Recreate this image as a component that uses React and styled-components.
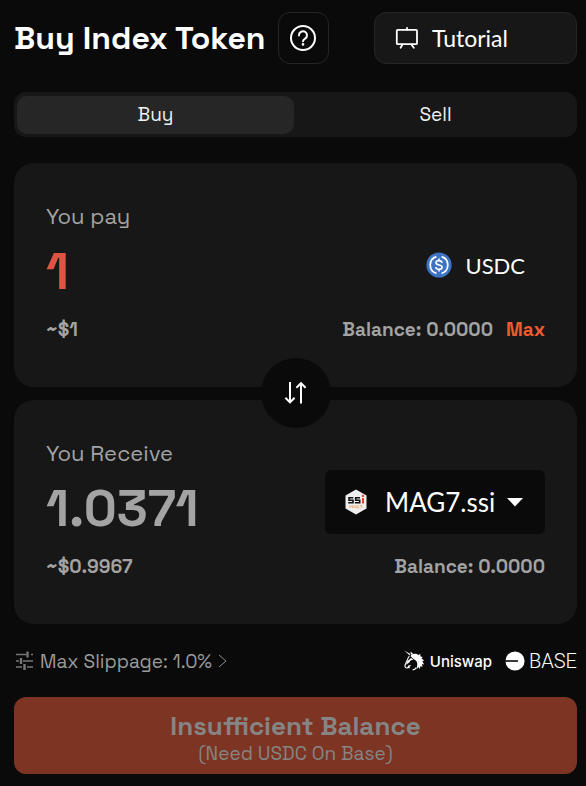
import React from 'react';
import styled, { createGlobalStyle } from 'styled-components';

const GlobalStyle = createGlobalStyle`
    * {
        box-sizing: border-box;
    }

    body {
        margin: 0;
        background: #0a0a0a;
        color: #fff;
        font-family: 'Space Grotesk', Inter, sans-serif;
    }

    button, input, select {
        margin: 0;
        padding: 0;
        border: 0;
        background: none;
        color: inherit;
        font: inherit;
    }

    button {
        cursor: pointer;
    }
`;

const QuestionIcon = () => (
    <svg width="28" height="28" viewBox="0 0 28 28" fill="none" stroke="#fff" strokeWidth="2" aria-hidden="true">
        <circle cx="14" cy="14" r="12" />
        <path d="M10 11.4a4 4 0 1 1 6.2 3.2c-1.4.9-2.2 1.4-2.2 2.7" strokeLinecap="round" />
        <circle cx="14" cy="20.4" r="1.3" fill="#fff" stroke="none" />
    </svg>
);

const BoardIcon = () => (
    <svg width="24" height="24" viewBox="0 0 24 24" fill="none" stroke="#fff" strokeWidth="1.8" strokeLinecap="round" aria-hidden="true">
        <rect x="1.8" y="3.8" width="20.2" height="14.4" rx="1" />
        <path d="M12 1.8v2M7.6 18.4l-2 3.4M16.4 18.4l2.4 3.4" />
    </svg>
);

const UsdcIcon = () => (
    <svg width="26" height="26" viewBox="0 0 26 26" fill="none" stroke="#fff" aria-hidden="true">
        <circle cx="13" cy="13" r="12.6" fill="#3e73c4" stroke="none" />
        <path d="M10.4 4.6a8.8 8.8 0 0 0 0 16.8M15.6 4.6a8.8 8.8 0 0 1 0 16.8" strokeWidth="1.7" />
        <path d="M16 10.8c-.2-1.5-1.3-2.2-3-2.2-1.8 0-3 .8-3 2.1 0 3.2 6.1 1.4 6.1 4.5 0 1.4-1.2 2.2-3.1 2.2s-3.1-.8-3.2-2.4M13 6.6v2M13 17.4v2" strokeWidth="1.6" />
    </svg>
);

const SsiIcon = () => (
    <svg width="22" height="26" viewBox="0 0 22 26" fill="none" aria-hidden="true">
        <path d="M11 .4 21.5 6.4v13.2L11 25.6.5 19.6V6.4z" fill="#eeeeef" />
        <path d="M8.3 8.8H4v2.4h4v2.6H3.2M15 8.8h-4.3v2.4h4v2.6H9.9" stroke="#111" strokeWidth="1.6" />
        <path d="M18 9v5.4" stroke="#e8432c" strokeWidth="2" />
        <circle cx="18" cy="6.9" r="1.2" fill="#e8432c" />
        <path d="M5 19v-2.6l1.3 1.5 1.2-1.5V19M8.5 19l1.2-2.4L11 19M13.6 16.7h-1.7V19h1.7v-1.2M14.8 16.7h2.2L15.8 19" stroke="#e8a765" strokeWidth=".8" />
    </svg>
);

const CaretIcon = () => (
    <svg width="16" height="9" viewBox="0 0 16 9" fill="#fff" aria-hidden="true">
        <path d="M0 0h16L8 8.5z" />
    </svg>
);

const SwapIcon = () => (
    <svg width="24" height="24" viewBox="0 0 24 24" fill="none" stroke="#fff" strokeWidth="2" aria-hidden="true">
        <path d="M6 1v20M1.4 16.8l4.6 4.6 4.6-4.6M17 22.5v-20M12.4 6.8l4.6-4.6 4.6 4.6" />
    </svg>
);

const SlidersIcon = () => (
    <svg width="18" height="20" viewBox="0 0 18 20" fill="none" stroke="#777" strokeWidth="1.6" aria-hidden="true">
        <path d="M0 3.5h10M15 3.5h2M0 10h3M7 10h10M0 16h6M11 16h6" />
        <path d="M11.5 .5v6M5 7v6M8.5 13v6" strokeWidth="2.4" />
    </svg>
);

const ChevronIcon = () => (
    <svg width="9" height="14" viewBox="0 0 9 14" fill="none" stroke="#8a8a8a" aria-hidden="true">
        <path d="M1 1l7 6-7 6" />
    </svg>
);

const UnicornIcon = () => (
    <svg width="22" height="22" viewBox="0 0 22 22" aria-hidden="true">
        <path d="M.4.6 6.600 4l-1 1.600z" fill="#ddd" />
        <path d="M6.400 1.400 9.600 4.200 6.800 4z" fill="#fff" />
        {/* mane */}
        <path d="M7.200 4.600c3-1.500 6-1 7.600.6l1.400-1.600.3 2.800 2.300.6-1.300 1.200 2.700 2.600-1.900.2 1.800 3.600-2.100-.6.500 3-1.900-.9-.9 3-1.300-2-2 2.500.7-3.700c.7-2.700-.2-4.400-2-5.800-1.600-1.300-2.800-2-4.400-3.900z" fill="#fff" />
        {/* face outline and muzzle */}
        <path d="M5.400 6.200C3.800 7.600 3.600 9.600 2.600 11.600c-1 2-2 3.200-1.600 5 .6 1.800 2.800 1.800 3.800.4" fill="none" stroke="#fff" strokeWidth="1.1" />
        <path d="M3.200 11.200 7 8l2.400 1.800-2.600.5-1.600 2.300-3.200 2.200zM4.600 15.200l3 .2-2 1.200.2 2-2.600-1.200z" fill="#fff" />
        <path d="M8.600 19.800c1.600 0 3-.8 3.600-2.200" fill="none" stroke="#fff" strokeWidth="1.2" />
    </svg>
);

const BaseIcon = () => (
    <svg width="20" height="20" viewBox="0 0 20 20" aria-hidden="true">
        <circle cx="10" cy="10" r="9.6" fill="#fff" />
        <path d="M0 10h13" stroke="#0a0a0a" strokeWidth="1.6" />
    </svg>
);

const App = () => {
    const [tab, setTab] = React.useState('Buy');
    const [pay, setPay] = React.useState('1');

    return (
        <Page>
            <GlobalStyle />
            <Header>
                <Title>Buy Index Token</Title>
                <HelpButton type="button" aria-label="Help">
                    <QuestionIcon />
                </HelpButton>
                <TutorialButton type="button">
                    <BoardIcon />
                    Tutorial
                </TutorialButton>
            </Header>

            <Tabs role="tablist">
                {['Buy', 'Sell'].map((name) => (
                    <Tab
                        key={name}
                        type="button"
                        role="tab"
                        aria-selected={tab === name}
                        $active={tab === name}
                        onClick={() => setTab(name)}>
                        {name}
                    </Tab>
                ))}
            </Tabs>

            <Cards>
                <Card>
                    <Label htmlFor="pay">You pay</Label>
                    <Row>
                        <Amount id="pay" $color="#e05244" value={pay} onChange={(e) => setPay(e.target.value)} />
                        <Token><UsdcIcon />USDC</Token>
                    </Row>
                    <SubRow>
                        <span>~$1</span>
                        <Balance>
                            <span>Balance: 0.0000</span>
                            <MaxButton type="button">Max</MaxButton>
                        </Balance>
                    </SubRow>
                </Card>
                <SwapButton type="button" aria-label="Swap tokens">
                    <SwapIcon />
                </SwapButton>
                <Card>
                    <Label htmlFor="receive">You Receive</Label>
                    <Row>
                        <Amount id="receive" $color="#a3a3a3" value="1.0371" readOnly />
                        <TokenPicker>
                            <SsiIcon />
                            <TokenSelect aria-label="Index token">
                                <option>MAG7.ssi</option>
                            </TokenSelect>
                            <CaretIcon />
                        </TokenPicker>
                    </Row>
                    <SubRow>
                        <span>~$0.9967</span>
                        <Balance>Balance: 0.0000</Balance>
                    </SubRow>
                </Card>
            </Cards>

            <Footer>
                <SlippageButton type="button">
                    <SlidersIcon />
                    Max Slippage: 1.0%
                    <ChevronIcon />
                </SlippageButton>
                <Partners>
                    <Uniswap><UnicornIcon />Uniswap</Uniswap>
                    <Base><BaseIcon />BASE</Base>
                </Partners>
            </Footer>

            <SubmitButton type="button" disabled>
                <SubmitTitle>Insufficient Balance</SubmitTitle>
                <SubmitNote>(Need USDC On Base)</SubmitNote>
            </SubmitButton>
        </Page>
    );
};

export default App

const Page = styled.main`
    padding: 12px 9px 12px 14px;
`

const Header = styled.header`
    display: flex;
    align-items: center;
    height: 52px;
`

const Title = styled.h1`
    margin: 0 12px 0 0;
    font-size: 32px;
    line-height: 40px;
    font-weight: 700;
    white-space: nowrap;
`

const HelpButton = styled.button`
    display: flex;
    align-items: center;
    justify-content: center;
    width: 51px;
    height: 52px;
    border: 1px solid #262626;
    border-radius: 12px;
`

const TutorialButton = styled.button`
    display: flex;
    align-items: center;
    gap: 13px;
    width: 203px;
    height: 52px;
    margin-left: auto;
    padding: 0 20px;
    border: 1px solid #262626;
    border-radius: 12px;
    background: #171717;
    font-family: Lato, sans-serif;
    font-size: 23px;
`

const Tabs = styled.div`
    display: flex;
    gap: 3px;
    height: 45px;
    margin-top: 28px;
    padding: 4px 3px 3px;
    border-radius: 12px;
    background: #171717;
`

const Tab = styled.button`
    flex: 1;
    padding-bottom: 2px;
    border-radius: 10px;
    background: ${(props) => (props.$active ? '#262626' : 'transparent')};
    color: #f0f0f0;
    font-size: 19px;
`

const Cards = styled.section`
    display: flex;
    flex-direction: column;
    align-items: center;
    margin-top: 26px;
`

const Card = styled.div`
    width: 100%;
    padding: 37px 32px 41px;
    border-radius: 20px;
    background: #171717;
`

const Label = styled.label`
    display: block;
    margin-bottom: 1px;
    color: #a3a3a3;
    font-size: 22px;
    line-height: 32px;
`

const Row = styled.div`
    display: flex;
    align-items: center;
    justify-content: space-between;
    height: 64px;
`

const Amount = styled.input`
    flex: 1;
    min-width: 0;
    height: 64px;
    padding-top: 12px;
    outline: none;
    color: ${(props) => props.$color};
    font-size: 51px;
    font-weight: 700;
`

const Token = styled.div`
    display: flex;
    align-items: center;
    gap: 13px;
    padding-right: 20px;
    font-family: Lato, sans-serif;
    font-size: 22px;
`

const TokenPicker = styled.div`
    display: flex;
    align-items: center;
    gap: 12px;
    width: 220px;
    height: 64px;
    padding: 0 22px 0 20px;
    border-radius: 6px;
    background: #0a0a0a;
`

const TokenSelect = styled.select`
    flex: 1;
    min-width: 0;
    padding-left: 6px;
    appearance: none;
    outline: none;
    font-family: Lato, sans-serif;
    font-size: 26px;
`

const SubRow = styled.div`
    display: flex;
    justify-content: space-between;
    margin-top: 17px;
    color: #a3a3a3;
    font-size: 19px;
    line-height: 32px;
    font-weight: 700;
`

const Balance = styled.div`
    display: flex;
    gap: 13px;
`

const MaxButton = styled.button`
    color: #f05a33;
`

const SwapButton = styled.button`
    display: flex;
    align-items: center;
    justify-content: center;
    position: relative;
    width: 70px;
    height: 70px;
    margin: -29px 0 -28px;
    border-radius: 50%;
    background: #0a0a0a;
`

const Footer = styled.div`
    display: flex;
    align-items: center;
    justify-content: space-between;
    height: 32px;
    margin: 21px 0 20px;
`

const SlippageButton = styled.button`
    display: flex;
    align-items: center;
    gap: 6px;
    padding-left: 2px;
    color: #9b9b9b;
    font-size: 19px;
`

const Partners = styled.div`
    display: flex;
    align-items: center;
    gap: 13px;
`

const Uniswap = styled.span`
    display: flex;
    align-items: center;
    gap: 4px;
    font-family: Inter, sans-serif;
    font-size: 15px;
    font-weight: 500;
`

const Base = styled.span`
    display: flex;
    align-items: center;
    gap: 4px;
    font-family: Roboto, sans-serif;
    font-size: 20px;
    font-weight: 300;
`

const SubmitButton = styled.button`
    display: flex;
    flex-direction: column;
    align-items: center;
    justify-content: center;
    width: 100%;
    height: 77px;
    padding-top: 6px;
    border-radius: 12px;
    background: #7d3422;
    color: #858585;
`

const SubmitTitle = styled.span`
    font-size: 26px;
    line-height: 30px;
    font-weight: 700;
`

const SubmitNote = styled.span`
    font-size: 19px;
    line-height: 26px;
`
